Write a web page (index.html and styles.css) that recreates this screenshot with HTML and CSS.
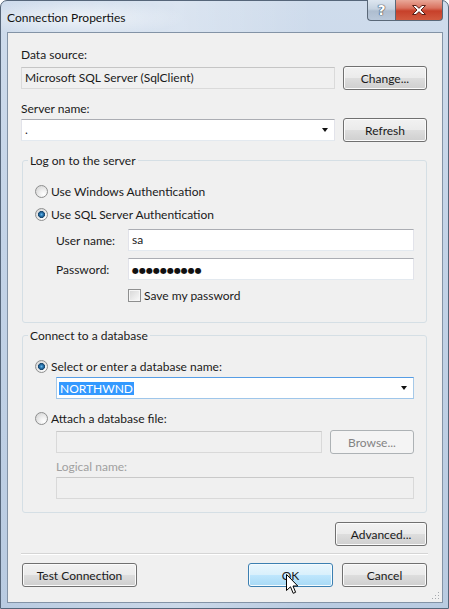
FILE: index.html
```html
<!DOCTYPE html>
<html lang="en">
<head>
    <meta charset="UTF-8">
    <meta name="viewport" content="width=device-width, initial-scale=1.0">
    <title>Connection Properties</title>
    <link rel="stylesheet" href="styles.css">
</head>
<body>
    <div class="window">
        <div class="titlebar">
            <span class="title">Connection Properties</span>
            <div class="caption-buttons">
                <span class="cap-help">?</span>
                <span class="cap-close">
                    <svg width="16" height="12" viewBox="0 0 16 12">
                        <path d="M1.5 1.5 L5 1.5 L8 4.3 L11 1.5 L14.5 1.5 L10 6 L14.5 10.5 L11 10.5 L8 7.7 L5 10.5 L1.5 10.5 L6 6 Z" fill="#fff" stroke="#5a2018" stroke-width="1" stroke-linejoin="round"/>
                    </svg>
                </span>
            </div>
        </div>

        <div class="client">
            <div class="label">Data source:</div>
            <div class="row">
                <div class="textbox readonly wide">Microsoft SQL Server (SqlClient)</div>
                <button class="btn">Change...</button>
            </div>

            <div class="label gap-top">Server name:</div>
            <div class="row row-tight">
                <div class="textbox combo wide"><span>.</span><span class="arrow"></span></div>
                <button class="btn">Refresh</button>
            </div>

            <fieldset class="group">
                <legend>Log on to the server</legend>
                <div class="group-body">
                    <label class="option"><span class="radio"></span>Use Windows Authentication</label>
                    <label class="option next"><span class="radio on"></span>Use SQL Server Authentication</label>
                    <div class="field-row user">
                        <span class="field-label">User name:</span>
                        <div class="textbox grow">sa</div>
                    </div>
                    <div class="field-row pass">
                        <span class="field-label">Password:</span>
                        <div class="textbox grow"><span class="dots">●●●●●●●●●●</span></div>
                    </div>
                    <label class="save"><span class="check"></span>Save my password</label>
                </div>
            </fieldset>

            <fieldset class="group second">
                <legend>Connect to a database</legend>
                <div class="group-body db-body">
                    <label class="option"><span class="radio on"></span>Select or enter a database name:</label>
                    <div class="textbox combo focused indent"><span class="selected">NORTHWND</span><span class="arrow"></span></div>
                    <label class="option attach"><span class="radio"></span>Attach a database file:</label>
                    <div class="row file-row indent">
                        <div class="textbox disabled file"></div>
                        <button class="btn off">Browse...</button>
                    </div>
                    <div class="label dim indent logical">Logical name:</div>
                    <div class="textbox disabled indent logical-box"></div>
                </div>
            </fieldset>

            <div class="advanced-row">
                <button class="btn advanced">Advanced...</button>
            </div>

            <div class="separator"></div>

            <div class="footer">
                <button class="btn test">Test Connection</button>
                <div class="footer-right">
                    <button class="btn hot">OK</button>
                    <button class="btn">Cancel</button>
                </div>
            </div>

            <svg class="grip" width="9" height="9" viewBox="0 0 9 9">
                <rect x="7" y="1" width="1" height="1" fill="#a5a9ae"/>
                <rect x="4" y="4" width="1" height="1" fill="#a5a9ae"/>
                <rect x="7" y="4" width="1" height="1" fill="#a5a9ae"/>
                <rect x="1" y="7" width="1" height="1" fill="#a5a9ae"/>
                <rect x="4" y="7" width="1" height="1" fill="#a5a9ae"/>
                <rect x="7" y="7" width="1" height="1" fill="#a5a9ae"/>
            </svg>
        </div>

        <!-- mouse pointer resting over OK -->
        <svg class="pointer" width="13" height="21" viewBox="0 0 13 21">
            <path d="M0.5 0.5 L0.5 16.5 L4.5 12.8 L7.2 19.3 L9.6 18.3 L7 12 L11.8 12 Z" fill="#fff" stroke="#000" stroke-width="1" stroke-linejoin="miter"/>
        </svg>
    </div>
</body>
</html>
```

FILE: styles.css
```css
body {
    margin: 0;
    font-family: Lato, "Open Sans", sans-serif;
    font-size: 12px;
    color: #1a1a1a;
}
.window {
    box-sizing: border-box;
    width: 449px;
    height: 609px;
    display: flex;
    flex-direction: column;
    position: relative;
    border: 1px solid #56667a;
    border-radius: 7px 7px 0 0;
    padding: 0 5px 5px 6px;
    background:
        radial-gradient(ellipse 110px 18px at 75px 17px, rgba(255,255,255,0.6), rgba(255,255,255,0) 100%),
        linear-gradient(90deg, rgba(255,255,255,0) 0, rgba(255,255,255,0.25) 40%, rgba(255,255,255,0) 70%),
        linear-gradient(180deg, #cfdcec 0%, #c3d3e7 40%, #b9cbe1 100%);
}
.titlebar {
    height: 31px;
    display: flex;
    justify-content: space-between;
    align-items: flex-start;
}
.title {
    padding-top: 9px;
    line-height: 16px;
    color: #111;
}
.caption-buttons {
    display: flex;
    margin-top: -1px;
}
.cap-help, .cap-close {
    box-sizing: border-box;
    height: 21px;
    display: flex;
    align-items: center;
    justify-content: center;
    border: 1px solid #5a6878;
    border-top: none;
}
.cap-help {
    width: 28px;
    border-right: none;
    border-radius: 0 0 0 4px;
    background: linear-gradient(180deg, #dde6f0 0%, #c5d2e0 45%, #aebdcf 55%, #b9c8da 100%);
    color: #fff;
    font-family: "DejaVu Sans", sans-serif;
    font-weight: bold;
    font-size: 14px;
    text-shadow: 0 0 1px #3a4656, 0 0 1px #3a4656, 0 0 1px #3a4656;
}
.cap-close {
    width: 48px;
    border-radius: 0 0 4px 0;
    background: linear-gradient(180deg, #e9a899 0%, #d9725f 40%, #c7402a 55%, #d25a3f 100%);
}
.client {
    flex: 1;
    position: relative;
    border: 1px solid #8393a6;
    background: #f0f0f0;
    padding: 14px 15px 0 13px;
    display: flex;
    flex-direction: column;
}
.label {
    line-height: 15px;
}
.gap-top {
    margin-top: 10px;
}
.dim {
    color: #a0a0a0;
}
.row {
    display: flex;
    align-items: center;
    gap: 8px;
    height: 26px;
    margin-top: 3px;
}
.row-tight {
    margin-top: 1px;
}
.textbox {
    box-sizing: border-box;
    height: 22px;
    line-height: 20px;
    padding: 0 3px;
    background: #fff;
    border: 1px solid #e2e3ea;
    border-top-color: #abadb3;
    border-bottom-color: #e3e9ef;
    white-space: nowrap;
}
.textbox.wide {
    width: 314px;
}
.textbox.grow {
    flex: 1;
}
.textbox.readonly {
    background: #f0f0f0;
    border-color: #dadada;
    border-top-color: #c5c5c5;
}
.textbox.disabled {
    background: #f0f0f0;
    border-color: #d9d9d9;
    border-top-color: #c9c9c9;
}
.combo {
    display: flex;
    justify-content: space-between;
    align-items: center;
}
.arrow {
    width: 0;
    height: 0;
    margin-right: 3px;
    border-left: 3.5px solid transparent;
    border-right: 3.5px solid transparent;
    border-top: 4px solid #111;
}
.combo.focused {
    border-color: #a6c9e8;
    border-top-color: #569de5;
    border-bottom-color: #9fc6ea;
}
.selected {
    background: #3399ff;
    color: #fff;
    line-height: 13px;
    padding: 0 1px;
    margin-left: -1px;
}
.btn {
    box-sizing: border-box;
    width: 84px;
    height: 24px;
    padding: 0;
    font: inherit;
    color: #1a1a1a;
    border: 1px solid #707070;
    border-radius: 3px;
    background: linear-gradient(180deg, #f2f2f2 0%, #ebebeb 48%, #dddddd 52%, #cfcfcf 100%);
    box-shadow: inset 0 0 0 1px #fbfbfb;
}
.btn.hot {
    border-color: #3c7fb1;
    background: linear-gradient(180deg, #eaf6fd 0%, #d9f0fc 48%, #bee6fd 52%, #a7d9f5 100%);
    box-shadow: inset 0 0 0 1px #f4fbfe;
}
.btn.off {
    color: #838383;
    border-color: #adb2b5;
    background: #f4f4f4;
    box-shadow: none;
}
.group {
    margin: 10px 0 0 1px;
    padding: 14px 0 19px 0;
    border: 1px solid #d5dfe5;
    border-radius: 3px;
    min-width: 0;
}
.group.second {
    margin-top: 5px;
    padding-bottom: 13px;
}
.group legend {
    margin-left: 5px;
    padding: 0 2px;
    line-height: 15px;
}
.group-body {
    display: flex;
    flex-direction: column;
    padding: 0 12px;
}
.option, .save {
    display: flex;
    align-items: center;
    gap: 3px;
    height: 18px;
}
.option.next {
    margin-top: 5px;
}
.radio {
    box-sizing: border-box;
    width: 13px;
    height: 13px;
    border-radius: 50%;
    border: 1px solid #8e8f8f;
    background: radial-gradient(circle at 70% 75%, #ffffff 0, #f0f0f0 35%, #cfcfcf 100%);
}
.radio.on {
    background:
        radial-gradient(circle at 50% 50%, #67b9ea 0, #2a77b3 1.6px, #18476e 3.2px, rgba(24,71,110,0) 3.8px),
        radial-gradient(circle at 70% 75%, #ffffff 0, #f0f0f0 35%, #cfcfcf 100%);
}
.field-row {
    display: flex;
    align-items: center;
    padding-left: 21px;
    height: 22px;
}
.field-row.user {
    margin-top: 6px;
}
.field-row.pass {
    margin-top: 7px;
}
.field-label {
    width: 72px;
}
.dots {
    font-family: "DejaVu Sans", sans-serif;
    font-size: 8px;
    letter-spacing: 0;
    color: #111;
}
.save {
    height: 16px;
    margin: 7px 0 0 93px;
}
.check {
    box-sizing: border-box;
    width: 13px;
    height: 13px;
    border: 1px solid #8e8f8f;
    background: linear-gradient(135deg, #d6d6d6 0%, #ececec 60%, #fbfbfb 100%);
    box-shadow: inset 0 0 0 1px #f6f6f6;
}
.indent {
    margin-left: 21px;
}
.db-body .combo {
    margin-top: 2px;
}
.option.attach {
    margin-top: 10px;
}
.file-row {
    height: 24px;
}
.textbox.file {
    width: 266px;
}
.logical {
    margin-top: 5px;
}
.logical-box {
    margin-top: 3px;
}
.advanced-row {
    display: flex;
    justify-content: flex-end;
    margin-top: 9px;
}
.btn.advanced {
    width: 92px;
}
.separator {
    margin-top: 7px;
    margin-right: -1px;
    border-top: 1px solid #d5d5d5;
    border-bottom: 1px solid #ffffff;
}
.footer {
    display: flex;
    justify-content: space-between;
    margin-top: 8px;
}
.btn.test {
    width: 115px;
    margin-left: 1px;
}
.footer-right {
    display: flex;
    gap: 9px;
}
.footer-right .btn {
    width: 85px;
}
.grip {
    position: absolute;
    right: 2px;
    bottom: 2px;
}
.pointer {
    position: absolute;
    left: 285px;
    top: 573px;
}
```
